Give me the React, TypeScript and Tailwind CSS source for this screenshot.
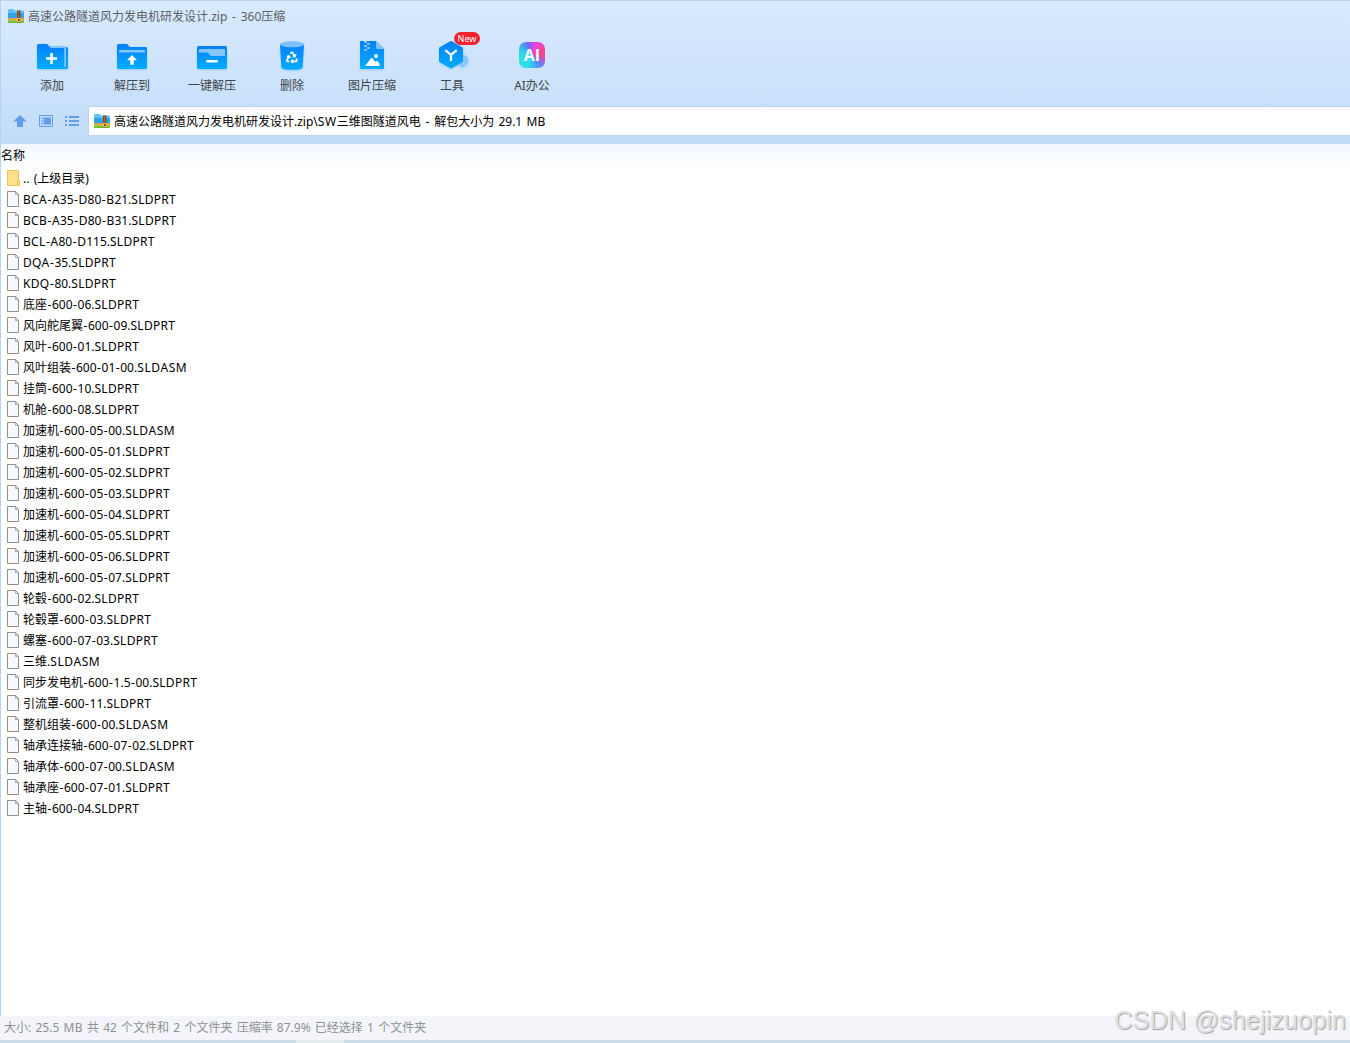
import React from 'react';

const files = [
  'BCA-A35-D80-B21.SLDPRT',
  'BCB-A35-D80-B31.SLDPRT',
  'BCL-A80-D115.SLDPRT',
  'DQA-35.SLDPRT',
  'KDQ-80.SLDPRT',
  '底座-600-06.SLDPRT',
  '风向舵尾翼-600-09.SLDPRT',
  '风叶-600-01.SLDPRT',
  '风叶组装-600-01-00.SLDASM',
  '挂筒-600-10.SLDPRT',
  '机舱-600-08.SLDPRT',
  '加速机-600-05-00.SLDASM',
  '加速机-600-05-01.SLDPRT',
  '加速机-600-05-02.SLDPRT',
  '加速机-600-05-03.SLDPRT',
  '加速机-600-05-04.SLDPRT',
  '加速机-600-05-05.SLDPRT',
  '加速机-600-05-06.SLDPRT',
  '加速机-600-05-07.SLDPRT',
  '轮毂-600-02.SLDPRT',
  '轮毂罩-600-03.SLDPRT',
  '螺塞-600-07-03.SLDPRT',
  '三维.SLDASM',
  '同步发电机-600-1.5-00.SLDPRT',
  '引流罩-600-11.SLDPRT',
  '整机组装-600-00.SLDASM',
  '轴承连接轴-600-07-02.SLDPRT',
  '轴承体-600-07-00.SLDASM',
  '轴承座-600-07-01.SLDPRT',
  '主轴-600-04.SLDPRT',
];

// Gives hyphens and capitals slightly wider advances than the font's own.
function Label({ text }: { text: string }) {
  return (
    <span className="whitespace-pre [word-spacing:1.1px]">
      {text.split(/(-|SLDASM|SW|[A-Z]+)/).map((part, i) => {
        if (part === '-') return <span key={i} className="pl-[0.5px] tracking-[0.6px]">-</span>;
        if (part === 'SLDASM' || part === 'SW') return <span key={i} className="tracking-[0.6px]">{part}</span>;
        if (/^[A-Z]+$/.test(part)) return <span key={i} className="tracking-[0.28px]">{part}</span>;
        return part;
      })}
    </span>
  );
}

function ArchiveIcon() {
  return (
    <svg width="16" height="14" viewBox="0 0 16 14" className="mb-[2px] shrink-0">
      <path d="M0 1Q0 0 1 0H5.5L7 1.5H15Q16 1.5 16 2.5V10H0Z" fill="#5cc3f8" />
      <path d="M0 4H16V9.5H0Z" fill="#2fa3ee" />
      <path d="M0 9.3H16V11.5H0Z" fill="#f8a81d" />
      <path d="M0 11.5H16V13Q16 14 15 14H1Q0 14 0 13Z" fill="#72bf38" />
      <path d="M9 1.5H12.5V13.5H9Z" fill="#8c4716" />
      <path d="M10 2.5h1v1h-1zM10 4.5h1v1h-1zM10 6.5h1v1h-1z" fill="#d6924e" />
      <path d="M9.4 9.4H12.1V12.6H9.4Z" fill="#6b3510" stroke="#ffd65a" />
    </svg>
  );
}

function BlueGradient({ id }: { id: string }) {
  return (
    <defs>
      <linearGradient id={id} x1="0" y1="0" x2="0" y2="1">
        <stop offset="0" stopColor="#057ffb" />
        <stop offset="1" stopColor="#02aefe" />
      </linearGradient>
    </defs>
  );
}

const iconClass = 'block drop-shadow-[0_1px_1px_rgba(40,130,230,0.25)]';

function AddIcon() {
  return (
    <svg width="40" height="40" viewBox="0 0 40 40" className={iconClass}>
      <BlueGradient id="g-add" />
      <path d="M5 10.5Q5 9 6.5 9H15L18 12H34.5Q36 12 36 13.5V32.5Q36 34 34.5 34H6.5Q5 34 5 32.5Z" fill="url(#g-add)" />
      <path d="M17 11H32Q34 11 34 13V32H32.3V14.4Q32.3 13 31 13H18.8Z" fill="#84c5ff" />
      <path d="M18.2 18H20.8V22.2H25V24.8H20.8V29H18.2V24.8H14V22.2H18.2Z" fill="#fff" />
    </svg>
  );
}

function ExtractIcon() {
  return (
    <svg width="40" height="40" viewBox="0 0 40 40" className={iconClass}>
      <BlueGradient id="g-ext" />
      <path d="M5 10.5Q5 9 6.5 9H15L18 12H33.5Q35 12 35 13.5V32.5Q35 34 33.5 34H6.5Q5 34 5 32.5Z" fill="url(#g-ext)" />
      <path d="M7 17.5V16.2Q7 15 8.2 15H31.8Q33 15 33 16.2V17.5Z" fill="#84c5ff" />
      <path d="M20 20L25 25.2H21.7V29.8H18.3V25.2H15Z" fill="#fff" />
    </svg>
  );
}

function OneKeyIcon() {
  return (
    <svg width="40" height="40" viewBox="0 0 40 40" className={iconClass}>
      <BlueGradient id="g-one" />
      <rect x="5" y="11" width="30" height="23" rx="1.5" fill="url(#g-one)" />
      <path d="M7 14.5Q7 14 8 14H32Q33 14 33 15V21H19.5Q18.5 21 17.8 20L16.5 18.2Q16 17.5 15 17.5H7Z" fill="#84c5ff" />
      <rect x="14" y="25" width="12" height="2.6" rx="1.3" fill="#fff" />
    </svg>
  );
}

function TrashIcon() {
  return (
    <svg width="40" height="40" viewBox="0 0 40 40" className={iconClass}>
      <BlueGradient id="g-del" />
      <path d="M8 9.5H32L30.7 32Q30.4 34 28 34.3Q20 35.3 12 34.3Q9.6 34 9.3 32Z" fill="url(#g-del)" />
      <ellipse cx="20" cy="9.3" rx="12" ry="3" fill="#7cc1ff" />
      <g transform="translate(13.2 15.7) scale(.56)" fill="none" stroke="#fff" strokeWidth="3" strokeLinejoin="round">
        <path d="M7 19H4.8a1.8 1.8 0 0 1-1.6-2.7L7.2 9.5" />
        <path d="M11 19h8.2a1.8 1.8 0 0 0 1.6-2.7l-1.2-2.1" />
        <path d="m14 16-3 3 3 3M8.3 13.6 7.2 9.5 3.1 10.6" />
        <path d="m9.3 5.8 1.1-1.9a1.8 1.8 0 0 1 3.1 0l4 6.9M13.4 9.6l4.1 1.1 1.1-4.1" />
      </g>
    </svg>
  );
}

function PictureIcon() {
  return (
    <svg width="40" height="40" viewBox="0 0 40 40" className={iconClass}>
      <BlueGradient id="g-pic" />
      <path d="M8 7Q8 6 9 6H24L32 14V33Q32 34 31 34H9Q8 34 8 33Z" fill="url(#g-pic)" />
      <path d="M24 6L32 14H25.5Q24 14 24 12.5Z" fill="#84c5ff" />
      <path d="M12 6h3v2h-3zM15 8h3v2h-3zM12 10h3v2h-3zM15 12h3v2h-3zM12 14h3v2h-3z" fill="#84c5ff" />
      <circle cx="24" cy="21" r="2" fill="#fff" />
      <path d="M13 31L19 23.2Q19.7 22.5 20.4 23.2L23.5 27L25 25.8L27.5 28.5V31Z" fill="#fff" />
    </svg>
  );
}

function ToolIcon() {
  return (
    <svg width="40" height="40" viewBox="0 0 40 40" className={iconClass}>
      <BlueGradient id="g-tool" />
      <path d="M31.5 19.5L36 22.2V28.5L31 32.3L26 30V26Z" fill="#88c8ff" />
      <path d="M18.2 6.3Q19 5.9 19.8 6.3L30.2 12.2Q31 12.7 31 13.5V26Q31 26.8 30.2 27.3L19.8 33.3Q19 33.8 18.2 33.3L7.8 27.3Q7 26.8 7 26V13.5Q7 12.7 7.8 12.2Z" fill="url(#g-tool)" />
      <path d="M13.3 15.2L19 19.8L24.7 15.2M19 19.8V26" fill="none" stroke="#fff" strokeWidth="2.2" />
    </svg>
  );
}

function AiIcon() {
  return (
    <div className="flex h-10 w-10 items-center justify-center">
      <div className="flex h-[26px] w-[26px] items-center justify-center overflow-hidden rounded-[7px] bg-[conic-gradient(from_0deg,#b94bee,#ee45d8_25deg,#f545a0_60deg,#f04a8c_90deg,#b05fd0_115deg,#6d7af0_135deg,#3fb0f5_165deg,#2cdcec_200deg,#2ce0e0_260deg,#35c4ee_300deg,#4f8df0_325deg,#8a5bf0_345deg,#b94bee)]">
        <span className="font-['Open_Sans'] text-[16px] leading-none font-bold text-white">AI</span>
      </div>
    </div>
  );
}

const tools = [
  { label: '添加', icon: <AddIcon /> },
  { label: '解压到', icon: <ExtractIcon /> },
  { label: '一键解压', icon: <OneKeyIcon /> },
  { label: '删除', icon: <TrashIcon /> },
  { label: '图片压缩', icon: <PictureIcon /> },
  { label: '工具', icon: <ToolIcon />, badge: 'New' },
  { label: 'AI办公', icon: <AiIcon /> },
];

function FileIcon() {
  return (
    <svg width="12" height="16" viewBox="0 0 12 16" className="mb-px shrink-0">
      <path d="M.5 .5H8.5L11.5 3.5V15.5H.5Z" fill="#f7f9fa" stroke="#8f8f8f" />
      <path d="M8.5 .5V3.5H11.5" fill="none" stroke="#a9a9a9" />
    </svg>
  );
}

function FolderIcon() {
  return (
    <svg width="13" height="16" viewBox="0 0 13 16" className="mb-px shrink-0">
      <path d="M.5 .5H11.5V10H12.5V15.5H.5Z" fill="#ffe08a" stroke="#eac65c" />
      <path d="M10.5 10V15" stroke="#eac65c" />
    </svg>
  );
}

export default function App() {
  return (
    <div className="flex h-[1043px] w-[1350px] flex-col overflow-hidden bg-white font-['Noto_Sans','Noto_Sans_CJK_SC',sans-serif] text-[12px] whitespace-nowrap text-black">
      <header className="flex h-[144px] shrink-0 flex-col border-t border-l border-[#b5d3f5] bg-linear-to-b from-[#d8eafe] to-[#c2ddf8]">
        <div className="flex h-[30px] items-center gap-1 pt-px pl-[7px] text-[#5d6166]">
          <ArchiveIcon />
          <Label text="高速公路隧道风力发电机研发设计.zip - 360压缩" />
        </div>
        <nav className="flex h-[75px] pl-[11px]">
          {tools.map((t) => (
            <div key={t.label} className="relative flex w-20 flex-col items-center pt-1 text-[#3f444a]">
              {t.icon}
              {t.badge && (
                <span className="absolute top-[1px] left-[42px] flex h-[13px] w-[26px] items-center justify-center rounded-full bg-[#f5222d] text-[9px] leading-none text-white">
                  {t.badge}
                </span>
              )}
              <span className="mt-[1px] leading-[20px]">{t.label}</span>
            </div>
          ))}
        </nav>
        <div className="flex h-[30px] items-center">
          <div className="flex w-[87px] items-center gap-[12px] pl-[12px]">
            <svg width="14" height="12" viewBox="0 0 14 12">
              <path d="M7 0L13.8 6.5H10V12H4V6.5H.2Z" fill="#629cec" />
            </svg>
            <svg width="14" height="12" viewBox="0 0 14 12" fill="#629cec">
              <path d="M.5 .5H13.5V11.5H.5Z" fill="none" stroke="#629cec" />
              <path d="M4.5 2.5H12V9.5H4.5ZM2 2.5H3.5V4H2ZM2 5.2H3.5V6.7H2ZM2 8H3.5V9.5H2Z" />
            </svg>
            <svg width="14" height="12" viewBox="0 0 14 12" fill="#629cec">
              <path d="M0 1H2V3H0ZM0 5H2V7H0ZM0 9H2V11H0ZM4 1H14V3H4ZM4 5H14V7H4ZM4 9H14V11H4Z" />
            </svg>
          </div>
          <div className="flex h-[30px] flex-1 items-center gap-1 border border-r-0 border-[#b9d5f3] bg-white pt-px pl-[5px]">
            <ArchiveIcon />
            <Label text={'高速公路隧道风力发电机研发设计.zip\\SW三维图隧道风电 - 解包大小为 29.1 MB'} />
          </div>
        </div>
        <div className="h-2 bg-[#c2ddf8]" />
      </header>
      <main className="flex flex-1 flex-col border-l border-[#b5d3f5]">
        <div className="flex h-6 items-center bg-linear-to-b from-[#f2f8fe] to-white">名称</div>
        <div className="flex h-[21px] items-center gap-[3px] pl-[6px]">
          <FolderIcon />
          <Label text=".. (上级目录)" />
        </div>
        {files.map((f) => (
          <div key={f} className="flex h-[21px] items-center gap-1 pl-[6px]">
            <FileIcon />
            <Label text={f} />
          </div>
        ))}
      </main>
      <footer className="relative flex h-[27px] shrink-0 flex-col bg-[#f3f5fa]">
        <div className="flex h-6 items-center pl-1 text-[#8f9193]">
          <Label text="大小: 25.5 MB 共 42 个文件和 2 个文件夹 压缩率 87.9% 已经选择 1 个文件夹" />
        </div>
        <div className="h-[3px] bg-[#cddde7]">
          <div className="ml-[296px] h-full w-12 bg-[#e5edf0]" />
        </div>
        <span className="absolute right-[4px] bottom-[7px] font-['Liberation_Sans'] text-[25.4px] leading-[32px] text-[#dedfe2] [text-shadow:1px_1px_1px_#a5a5a5]">
          CSDN @shejizuopin
        </span>
      </footer>
    </div>
  );
}
